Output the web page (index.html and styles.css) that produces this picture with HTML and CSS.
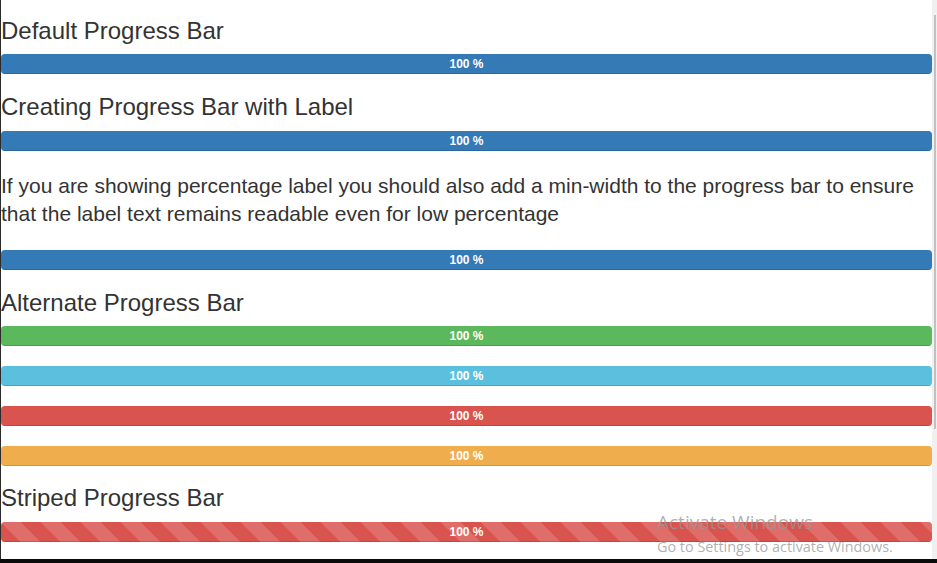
FILE: index.html
```html
<!DOCTYPE html>
<html lang="en">
<head>
    <meta charset="UTF-8">
    <meta name="viewport" content="width=device-width, initial-scale=1.0">
    <title>progress bars</title>
    <link rel="stylesheet" href="styles.css">
</head>
<body>

<div class="screen">
    <div class="page">
        <h3>Default Progress Bar</h3>
        <div class="progress">
            <div class="progress-bar" style="width: 100%">100 %</div>
        </div>

        <h3>Creating Progress Bar with Label</h3>
        <div class="progress">
            <div class="progress-bar" style="width: 100%">100 %</div>
        </div>

        <p>If you are showing percentage label you should also add a min-width to the progress bar to ensure that the label text remains readable even for low percentage</p>
        <div class="progress">
            <div class="progress-bar" style="width: 100%">100 %</div>
        </div>

        <h3>Alternate Progress Bar</h3>
        <div class="progress">
            <div class="progress-bar success" style="width: 100%">100 %</div>
        </div>
        <div class="progress">
            <div class="progress-bar info" style="width: 100%">100 %</div>
        </div>
        <div class="progress">
            <div class="progress-bar danger" style="width: 100%">100 %</div>
        </div>
        <div class="progress">
            <div class="progress-bar warning" style="width: 100%">100 %</div>
        </div>

        <h3 class="striped-title">Striped Progress Bar</h3>
        <div class="progress">
            <div class="progress-bar danger striped" style="width: 100%">100 %</div>
        </div>

        <div class="activate">
            <div class="activate-title">Activate Windows</div>
            <div class="activate-sub">Go to Settings to activate Windows.</div>
        </div>
    </div>
    <div class="scrollbar">
        <div class="thumb"></div>
    </div>
</div>
<div class="taskbar"></div>

</body>
</html>
```

FILE: styles.css
```css
body {
    margin: 0;
    font-family: "Liberation Sans", Arial, Helvetica, sans-serif;
    color: #333333;
    background: #ffffff;
    overflow: hidden;
}
.screen {
    display: flex;
    height: 559px;
    border-left: 1px solid #2b2b2b;
}
.page {
    position: relative;
    width: 931px;
    overflow: hidden;
    padding-top: 18px;
    box-sizing: border-box;
}
.scrollbar {
    flex: 1;
    background: #f0f0f0;
    padding: 15px 1px 0 2px;
}
.thumb {
    height: 414px;
    background: #c1c1c1;
}
.taskbar {
    height: 4px;
    background: #0a0a0a;
}
h3 {
    font-size: 24px;
    font-weight: normal;
    line-height: 1.1;
    margin: 20px 0 10px;
}
.page > h3:first-child {
    margin-top: 0;
}
/* collapses with the bar's 20px margin, leaves 19px */
.striped-title {
    margin-top: -1px;
}
p {
    font-size: 21px;
    line-height: 28px;
    margin: 0 0 22px;
    padding-top: 1px;
}
.progress {
    height: 20px;
    margin-bottom: 20px;
    overflow: hidden;
    background: #f5f5f5;
    border-radius: 4px;
    box-shadow: inset 0 1px 2px rgba(0, 0, 0, .1);
}
.progress-bar {
    height: 100%;
    font-size: 12px;
    font-weight: bold;
    line-height: 20px;
    color: #fff;
    text-align: center;
    background-color: #337ab7;
    box-shadow: inset 0 -1px 0 rgba(0, 0, 0, .15);
}
.success { background-color: #5cb85c; }
.info { background-color: #5bc0de; }
.danger { background-color: #d9534f; }
.warning { background-color: #f0ad4e; }
.striped {
    background-image: linear-gradient(45deg, rgba(255, 255, 255, .15) 25%, transparent 25%, transparent 50%, rgba(255, 255, 255, .15) 50%, rgba(255, 255, 255, .15) 75%, transparent 75%, transparent);
    background-size: 40px 40px;
}
.activate {
    position: absolute;
    left: 656px;
    top: 510px;
    color: rgba(150, 150, 150, .75);
    font-family: "Open Sans", "Noto Sans", sans-serif;
}
.activate-title {
    font-size: 19px;
    line-height: 25px;
}
.activate-sub {
    font-size: 14.4px;
    line-height: 21px;
    margin-top: 1px;
}
```
